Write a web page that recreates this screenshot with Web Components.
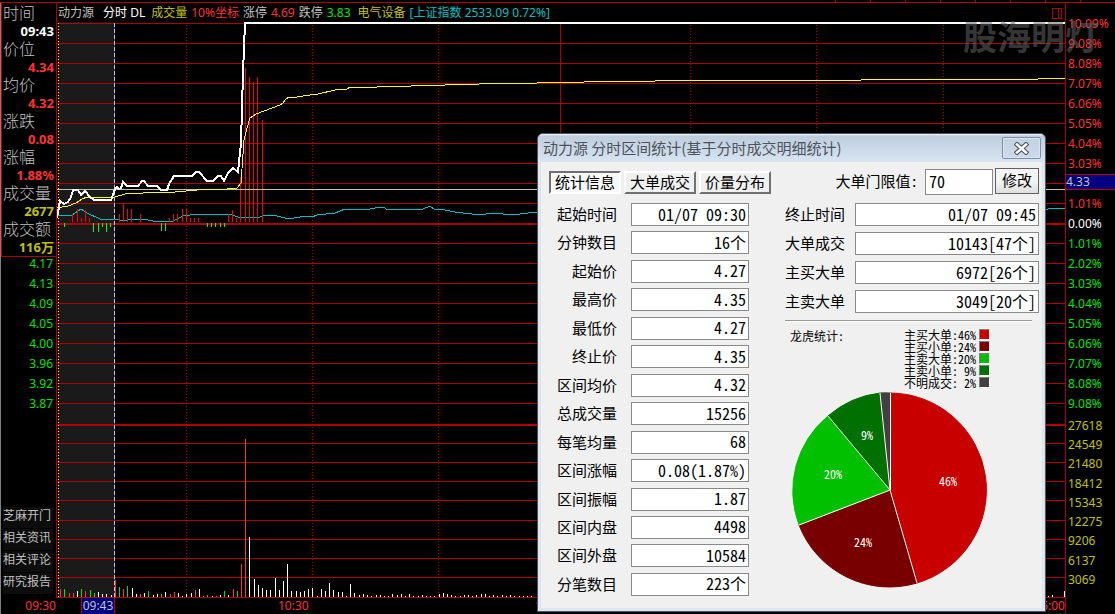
<!DOCTYPE html>
<html lang="zh-CN">
<head>
<meta charset="utf-8">
<title>动力源 分时</title>
<style>
html, body { margin: 0; background: #000; }
body { font-family: "Noto Sans", "Noto Sans CJK SC", sans-serif; font-size: 12px; }
</style>
</head>
<body>
<stock-terminal></stock-terminal>
<script>
const make = (name, html, after) => {
  const t = document.createElement('template');
  t.innerHTML = html;
  customElements.define(name, class extends HTMLElement {
    constructor() {
      super();
      this.attachShadow({ mode: 'open' }).append(t.content.cloneNode(true));
    }
    connectedCallback() { if (after) after(this, this.shadowRoot); }
  });
};

/* sidebar: cursor readout, price scale, links */
const readout = [
  ['时间', '09:43', '#fff'], ['价位', '4.34', '#ff3232'], ['均价', '4.32', '#ff3232'],
  ['涨跌', '0.08', '#ff3232'], ['涨幅', '1.88%', '#ff3232'], ['成交量', '2677', '#c0c000'],
  ['成交额', '116万', '#c0c000']
];
make('side-bar', `<style>
:host { display: flex; flex-direction: column; box-sizing: border-box; border-left: 1px solid #808080; border-right: 1px solid #b00000; }
dl { margin: 0; padding: 1px 2px 0 1px; border: 1px solid #b00000; border-right: 0; border-top: 0; color: #c0c0c0; }
dt, dd { margin: 0; height: 18px; line-height: 18px; white-space: nowrap; }
dt { font-size: 16px; font-weight: 300; }
dd { font-size: 13px; font-weight: 700; text-align: right; color: var(--c); }
ul { margin: 0; padding: 0 3px 0 0; list-style: none; text-align: right; color: #00e600; }
li { height: 20px; line-height: 14px; }
nav { margin-top: auto; padding: 0 3px 4px 2px; display: grid; gap: 1px; }
nav a { height: 21px; line-height: 17px; background: #0d0d0d; color: #c0c0c0; text-decoration: none; white-space: nowrap; }
</style>
<dl>${readout.map(r => `<dt>${r[0]}</dt><dd style="--c:${r[2]}">${r[1]}</dd>`).join('')}</dl>
<ul>${['4.17','4.13','4.09','4.05','4.00','3.96','3.92','3.87'].map(v => `<li>${v}</li>`).join('')}</ul>
<nav>${['芝麻开门','相关资讯','相关评论','研究报告'].map(v => `<a href="#">${v}</a>`).join('')}</nav>`);

make('quote-header', `<style>
:host { display: flex; align-items: center; padding: 1px 3px 0 1px; white-space: nowrap; line-height: 18px; color: #c0c0c0; }
span { margin-right: 4px; }
.name { margin-right: 9px; } .w { color: #fff; margin-right: 6px; } .y { color: #c0c000; } .r { color: #ff3232; } .g { color: #00e600; margin-right: 7px; } .c { color: #00c0c0; }
svg { margin-left: auto; display: block; }
</style>
<span class="name">动力源</span><span class="w">分时 DL</span><span class="y">成交量</span><span class="r">10%坐标</span>
<span>涨停</span><span class="r">4.69</span><span>跌停</span><span class="g">3.83</span><span class="y">电气设备</span><span class="c">[上证指数 2533.09 0.72%]</span>
<svg width="10" height="11" shape-rendering="crispEdges"><path d="M.5.5h9v10h-9zM6.500 0v11" fill="none" stroke="#b00000"/></svg>`);

make('percent-axis', `<style>
:host { display: flex; flex-direction: column; min-height: 0; border-left: 1px solid #b00000; color: #ff3232; }
ul { margin: 0; padding: 0; list-style: none; }
li { height: 20px; line-height: 20px; padding-left: 2px; }
.price { padding-top: 11px; }
.zero { color: #fff; } .down { color: #00e600; }
.price .at { padding: 0; }
.at b { display: block; height: 14px; line-height: 14px; background: #000080; color: #c0c0c0; font-weight: 400; border: solid #b00000; border-width: 1px 0; }
.vol { color: #c0c000; flex: 1; display: grid; grid-auto-rows: 1fr; padding: 2px 0 9px; }
.vol li { height: auto; line-height: 19px; }
</style>
<ul class="price">${['10.09','9.08','8.08','7.07','6.06','5.05','4.04','3.03'].map(v => `<li>${v}%</li>`).join('')}
<li class="at"><b>4.33</b></li><li>1.01%</li><li class="zero">0.00%</li>
${['1.01','2.02','3.03','4.04','5.05','6.06','7.07','8.08','9.08'].map(v => `<li class="down">${v}%</li>`).join('')}</ul>
<ul class="vol">${[27618,24549,21480,18412,15343,12275,9206,6137,3069].map(v => `<li>${v}</li>`).join('')}</ul>`);

/* minute chart: price, average, index and volume */
const R = '#b00000';
const pricePts = '57,218 60,201 64,204 68,202 71,197 73,190 78,190 81,195 85,191 90,197 94,200 111,200 113,195 115,189 117,187 119,189 121,188 123,182 127,186 138,186 142,181 144,181 148,186 157,186 161,190 167,190 169,184 174,176 192,176 196,172 199,172 207,181 213,181 218,176 221,176 224,181 228,173 233,168 238,172 241,143 243,73 245,23 1065,23';
const avgPts = '57,208 68,206 76,203 82,199 87,197 110,198 115,197 125,194 143,193 175,192 197,190 227,189 237,188 241,183 244,140 247,128 250,118 256,114 280,105 283,103 286,99 289,97 297,97 310,95 318,94 335,90 347,89 350,87 377,87 378,86 411,86 412,85 445,85 446,84 479,84 480,83 537,83 538,82 584,82 585,81 655,81 656,80 861,80 862,79 1038,79 1039,78 1065,78';
const idxPts = '57,215 67,216 72,215 81,209 87,213 100,219 115,219 123,221 133,219 143,219 153,221 159,222 173,221 183,216 197,214 230,214 238,217 258,218 264,215 273,215 285,218 294,218 306,216 312,217 317,215 335,213 345,209 352,209 365,210 375,208 383,207 388,210 395,209 423,209 430,206 434,209 445,210 455,212 480,215 493,213 512,215 528,213 1040,210 1048,209 1055,208 1065,209';
const volume = '60r8 64g8 69r4 73r4 77w6 81g8 85r6 90g7 94g4 98w5 102w3 106w3 111w2 115r17 119g10 123r8 127g11 132w9 136w3 140r3 144w4 148g6 153w2 157w3 161g3 165w5 170r3 174r5 178w4 182w1 186w3 191w4 195r7 199w8 203g1 207g2 212w1 216r1 220w2 224g6 228w2 233r8 237g6 241r33 245r158 249w60 254w18 258w12 262w9 266w7 270w7 275w19 279w7 283w16 287w33 291w6 296w6 300w5 304w6 308w8 312w9 317w1 321w8 325w6 329w14 333w7 338w5 342w5 346w1 350w13 354w4 359w2 363w3 367w2 371w1 376w2 380w2 384w1 388w1 392w3 397w2 401w3 405w1 409w3 413w1 418w1 422w2 426w1 430w1 434w1 439w3 443w4 447w3 451w2 455w1 460w1 464w2 468w2 472w1 476w2 481w3 485w3 489w1 493w2 497w1 502w2 506w1 510w2 514w1 519w1 523w1 527w1 531w1 1048w1 1052w2 1064w6';
const force = '72-8 77-13 81-4 85-12 89-4 119-8 123-18 127-13 131-13 140-8 169-4 173-8 177-8 182-13 186-13 190-4 194-4 198-4 228-8 232-12 236-4 240-45 245-154 249-145 253-140 257-145 262-102';
const sell = '64-4 93-9 98-9 102-4 106-9 110-4 161-8 165-8 207-4 211-4 215-4 220-4 224-4';
const col = { r: '#ff3232', g: '#00e600', w: '#fff' };
const hline = (y, h = 1) => `<rect x="57" y="${y}" width="1008" height="${h}" fill="${R}"/>`;
const dots = x => `<path d="M${x + .5} 25V597" stroke="${R}" stroke-dasharray="1 2"/>`;
let g = '<rect x="58" y="22" width="56" height="575" fill="#1a1a1a"/>';
for (let y = 43; y < 420; y += 20) if (y !== 223) g += hline(y);
g += hline(23) + hline(223, 2) + hline(424, 2);
for (const y of [443, 462, 481, 500, 520, 539, 558, 577, 597]) g += hline(y);
g += [186, 312, 438, 690, 816, 943].map(dots).join('');
g += `<rect x="560" y="23" width="1" height="574" fill="${R}"/><path d="M58.500 23V597" stroke="#ffff40" stroke-dasharray="1 2"/>`;
for (const [, x, c, h] of volume.matchAll(/(\d+)([rgw])(\d+)/g)) g += `<rect x="${x}" y="${597 - h}" width="1" height="${h}" fill="${col[c]}"/>`;
g += `<polyline points="${idxPts}" stroke="#00c0c0"/>`;
for (const [, x, h] of force.matchAll(/(\d+)-(\d+)/g)) g += `<rect x="${x}" y="${222 - h}" width="1" height="${h}" fill="#f00"/>`;
for (const [, x, h] of sell.matchAll(/(\d+)-(\d+)/g)) g += `<rect x="${x}" y="223" width="1" height="${h}" fill="#0f0"/>`;
g += `<rect x="57" y="189" width="1008" height="1" fill="#c0c0c0"/><rect x="197" y="189" width="30" height="1" fill="#4040c0"/>
<path d="M114.500 23V597" stroke="#3030a0"/><path d="M114.500 23V597" stroke="#c8c8c8" stroke-dasharray="4 2"/>
<polyline points="${avgPts}" stroke="#ff0"/><polyline points="${pricePts}" stroke="#fff" stroke-width="2"/>`;
make('minute-chart', `<style>
:host { display: block; min-height: 0; }
svg { display: block; width: 100%; height: 100%; }
</style><svg viewBox="57 22 1008 576" preserveAspectRatio="none" fill="none" shape-rendering="crispEdges">${g}</svg>`);

make('time-axis', `<style>
:host { display: grid; grid-template-columns: 56px minmax(0,1fr) 50px; box-sizing: border-box; border-left: 1px solid #808080; color: #ff3232; line-height: 15px; }
.first { text-align: right; padding-right: 1px; }
.scale { display: grid; grid-template-columns: 24fr 34fr 163fr 34fr 223fr 34fr 219fr 34fr 209fr 34fr; white-space: nowrap; }
.scale > * { min-width: 0; }
.now { background: #000080; color: #c0c0c0; border: solid #b00000; border-width: 0 1px; text-align: center; }
.end { border-left: 1px solid #b00000; }
.last { display: flex; justify-content: flex-end; }
</style>
<span class="first">09:30</span>
<div class="scale"><i></i><span class="now">09:43</span><i></i><span>10:30</span><i></i><span>11:30</span><i></i><span>14:00</span><i></i><span class="last">15:00</span></div>
<i class="end"></i>`);

make('top-ticks', `<style>
:host { display: block; box-sizing: border-box; border-bottom: 1px solid #b00000; padding-left: 835px; }
div { height: 2px; background: repeating-linear-gradient(90deg, #b00000 0 1px, transparent 1px 35px); }
</style><div></div>`);

/* statistics dialog parts */
make('stat-row', `<style>
:host { display: flex; align-items: center; justify-content: space-between; }
label { flex: 1; text-align: var(--align, right); font-size: 15px; line-height: 20px; padding-bottom: 1px; white-space: nowrap; }
input { box-sizing: border-box; width: var(--field, 118px); height: 23px; margin: 0 0 0 var(--gap, 14px); padding: 0 2px 2px; border: 1px solid #8a8a8a; border-radius: 0; background: #fff; color: #000; outline: 0;
  font: 16px/20px "Noto Sans CJK SC", sans-serif; font-feature-settings: "hwid"; text-align: right; }
</style><label for="v"></label><input id="v" readonly>`, (el, s) => {
  s.querySelector('label').textContent = el.getAttribute('label');
  s.querySelector('input').value = el.getAttribute('value');
});

make('tab-button', `<style>
:host { display: block; }
button { display: block; width: 72px; height: 23px; margin: 0; padding: 0 0 1px; border: 2px solid; border-color: #fff #707070 #707070 #fff; background: #f0f0f0; color: #000; font: 15px/18px "Noto Sans CJK SC", sans-serif; white-space: nowrap; }
:host([selected]) button { background: #f8f8f8; border-color: #707070 #fff #fff #707070; padding: 0 0 2px; }
</style><button type="button" role="tab"><slot></slot></button>`);

const slices = [['#c80000', 890, 393, 917, 583], ['#780000', 917, 583, 799, 525], ['#00c000', 799, 525, 828, 416], ['#007000', 828, 416, 880, 393], ['#404040', 880, 393, 890, 393]];
make('share-pie', `<style>
:host { display: block; }
svg { display: block; }
text { fill: #fff; font: 12px "Noto Sans CJK SC", sans-serif; font-feature-settings: "hwid"; text-anchor: middle; }
</style><svg width="196" height="196" viewBox="792 392 196 196">
${slices.map(([c, a, b, x, y]) => `<path d="M890 490L${a} ${b}A97 97 0 0 1 ${x} ${y}Z" fill="${c}" stroke="${c}"/>`).join('')}
<path d="M890.500 490V393M890 490L917 583M890 490L799 525M890 490L828 416M890 490L880 393" stroke="#fff" fill="none"/>
<text x="948" y="486">46%</text><text x="863" y="547">24%</text><text x="833" y="479">20%</text><text x="867" y="440">9%</text></svg>`);

make('pie-legend', `<style>
:host { display: block; }
ul { margin: 0; padding: 0; list-style: none; font: 12px/12px "Noto Sans CJK SC", sans-serif; font-feature-settings: "hwid"; white-space: pre; }
li { display: flex; justify-content: space-between; width: 86px; height: 12px; }
i { box-sizing: border-box; width: 11px; height: 11px; background: var(--c); border: 1px solid; border-color: #808080 #fff #fff #808080; }
</style><ul>${[['主买大单:46%', '#c80000'], ['主买小单:24%', '#780000'], ['主卖大单:20%', '#00c000'], ['主卖小单: 9%', '#007000'], ['不明成交: 2%', '#404040']]
  .map(([t, c]) => `<li><span>${t}</span><i style="--c:${c}"></i></li>`).join('')}</ul>`);

const rows = a => a.map(([l, v]) => `<stat-row label="${l}" value="${v}"></stat-row>`).join('');
make('stats-dialog', `<style>
:host { display: flex; flex-direction: column; box-sizing: border-box; width: 509px; border: 1px solid #50565e; border-radius: 6px 6px 0 0; padding: 0 3px 3px; background: #dbe6f2; color: #000; font-family: "Noto Sans CJK SC", sans-serif; overflow: hidden; }
header { display: flex; justify-content: space-between; height: 28px; margin: 0 -3px; padding: 0 4px 0 3px; background: linear-gradient(#f4f8fc, #becddd 2px, #d8e5f2); }
h1 { margin: 0; padding-left: 2px; font-size: 15px; line-height: 28px; font-weight: 400; color: #4c535c; white-space: nowrap; }
.close { width: 39px; height: 22px; margin-top: 3px; padding: 0; border: 1px solid #7d8ea8; border-radius: 2px; background: linear-gradient(#c3d1e1, #cddaea); box-shadow: inset 0 0 0 1px #dbe5f0; }
.close svg { display: block; margin: auto; }
main { flex: 1; background: #f0f0f0; padding: 6px 3px 0 8px; }
.bar { display: flex; align-items: center; height: 26px; }
.tabs { display: flex; gap: 3px; padding-top: 3px; }
.limit { display: flex; margin-left: auto; align-items: center; font-size: 15px; line-height: 20px; }
.limit input { box-sizing: border-box; width: 68px; height: 26px; margin: 2px 2px 0 7px; padding: 0 3px 3px; border: 1px solid #8a8a8a; outline: 0; font: 16px "Noto Sans CJK SC", sans-serif; font-feature-settings: "hwid"; }
.limit button { width: 44px; height: 26px; padding: 0 0 2px; border: 1px solid #606060; background: linear-gradient(#f4f4f4 50%, #dedede); font: 15px/20px "Noto Sans CJK SC", sans-serif; white-space: nowrap; }
.cols { display: flex; justify-content: space-between; padding-top: 9px; }
.left { width: 200px; height: 393px; display: flex; flex-direction: column; justify-content: space-between; }
.right { width: 254px; --align: left; --field: 184px; --gap: 10px; }
.group { display: grid; gap: 6px; }
hr { margin: 7px 7px 7px 0; border: 0; border-top: 1px solid #989898; border-bottom: 1px solid #fff; }
.sum { display: flex; padding: 0 49px 0 5px; justify-content: space-between; font-size: 12px; line-height: 14px; }
.sum span, .limit label { font-feature-settings: "hwid"; }
share-pie { margin: 3px 0 0 7px; }
</style>
<header><h1>动力源 分时区间统计(基于分时成交明细统计)</h1>
<button class="close" aria-label="关闭"><svg width="15" height="13" viewBox="0 0 15 13"><path d="M3 2.500L12 10.500M12 2.500L3 10.500" stroke="#454d5c" stroke-width="4.600" stroke-linecap="square"/><path d="M3 2.500L12 10.500M12 2.500L3 10.500" stroke="#fff" stroke-width="2.600" stroke-linecap="square"/></svg></button></header>
<main>
<div class="bar"><div class="tabs" role="tablist"><tab-button selected>统计信息</tab-button><tab-button>大单成交</tab-button><tab-button>价量分布</tab-button></div>
<div class="limit"><label for="lim">大单门限值:</label><input id="lim" value="70"><button type="button">修改</button></div></div>
<div class="cols"><div class="left">${rows([['起始时间', '01/07 09:30'], ['分钟数目', '16个'], ['起始价', '4.27'], ['最高价', '4.35'], ['最低价', '4.27'], ['终止价', '4.35'], ['区间均价', '4.32'], ['总成交量', '15256'], ['每笔均量', '68'], ['区间涨幅', '0.08(1.87%)'], ['区间振幅', '1.87'], ['区间内盘', '4498'], ['区间外盘', '10584'], ['分笔数目', '223个']])}</div>
<div class="right"><div class="group">${rows([['终止时间', '01/07 09:45'], ['大单成交', '10143[47个]'], ['主买大单', '6972[26个]'], ['主卖大单', '3049[20个]']])}</div>
<hr><div class="sum"><span>龙虎统计:</span><pie-legend></pie-legend></div><share-pie></share-pie></div></div>
</main>`);

make('stock-terminal', `<style>
:host { position: relative; display: grid; min-height: 100vh; grid-template-columns: 57px minmax(0,1fr) 50px; grid-template-rows: 3px 19px minmax(0,1fr) 16px; background: #000; overflow: hidden; }
top-ticks, time-axis { grid-column: 1 / -1; }
side-bar { grid-row: 2 / 4; grid-column: 1; }
quote-header { grid-row: 2; grid-column: 2; }
minute-chart { grid-row: 3; grid-column: 2; }
percent-axis { grid-row: 2 / 4; grid-column: 3; }
.mark { position: absolute; right: 16px; top: 11px; font: 700 34px/50px "Noto Sans CJK SC", sans-serif; color: rgba(100,100,100,.55); }
stats-dialog { position: absolute; right: 69px; top: 133px; bottom: 2px; }
</style>
<top-ticks></top-ticks><side-bar></side-bar><quote-header></quote-header><percent-axis></percent-axis><minute-chart></minute-chart><time-axis></time-axis>
<div class="mark">股海明灯</div><stats-dialog></stats-dialog>`);
</script>
</body>
</html>
